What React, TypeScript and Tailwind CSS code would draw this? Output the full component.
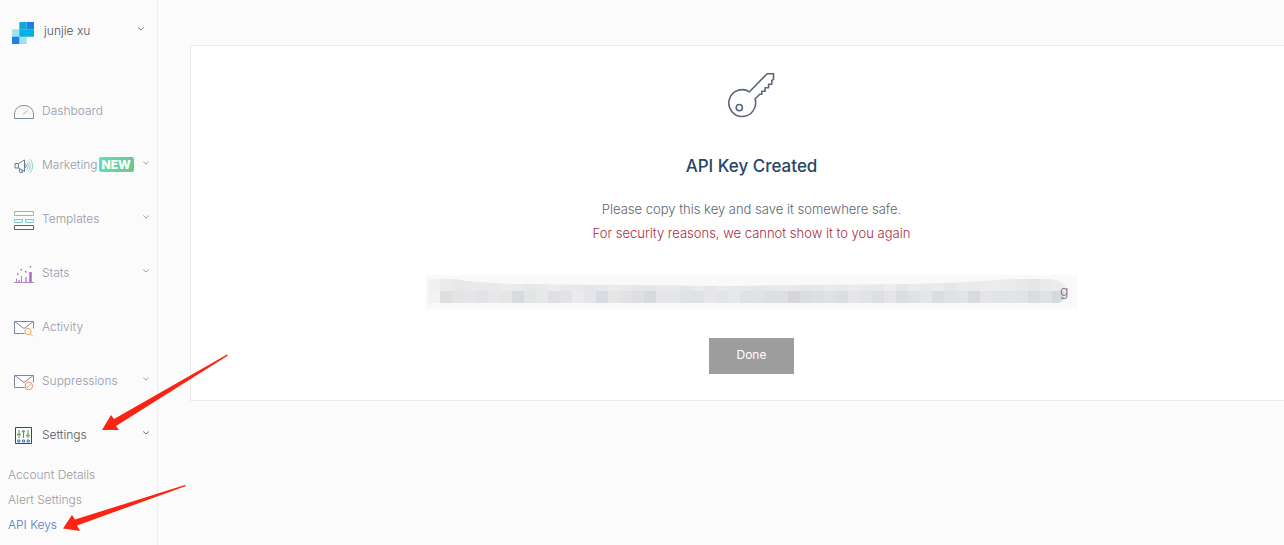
import type { ReactNode } from "react";

function Chevron({ className }: { className: string }) {
  return (
    <svg viewBox="0 0 8 6" className={`h-1.5 w-2 shrink-0 ${className}`} fill="none" stroke="currentColor" strokeWidth="1" aria-hidden="true">
      <path d="M1.2 1.5 4 4 6.8 1.5" />
    </svg>
  );
}

function Logo() {
  return (
    <svg viewBox="0 0 22 22" className="h-[22px] w-[22px] shrink-0" role="img" aria-label="SendGrid">
      <path fill="#9fe1f3" d="M0 7.3h7.3v7.4H0zM7.3 14.7h7.4V22H7.3z" />
      <path fill="#1a82e2" d="M0 14.7h7.3V22H0z" />
      <path fill="#12a8de" d="M7.3 0h7.4v7.3H7.3z" />
      <path fill="#00b2e3" d="M14.7 7.3H22v7.400h-7.300zM7.3 7.3h7.4v7.4H7.3z" />
      <path fill="#1a82e2" d="M14.7 0H22v7.3h-7.3z" />
    </svg>
  );
}

function NavIcon({ children }: { children: ReactNode }) {
  return (
    <svg viewBox="0 0 20 20" className="mt-0.5 h-5 w-5 shrink-0" fill="none" strokeWidth="1" aria-hidden="true">
      {children}
    </svg>
  );
}

const dashboardIcon = (
  <NavIcon>
    <path stroke="#7d8b9a" d="M.5 16.500v-4.300C.5 7 4.800 3.500 10 3.500s9.500 3.500 9.500 8.700v4.300z" />
    <path stroke="#c5ae9a" d="m9 12.500 4.800-4" />
    <path stroke="#d3d9df" strokeDasharray="1 2" d="M3.500 12.500C3.500 8.500 6.500 6 10 6s6.500 2.500 6.500 6.500" />
  </NavIcon>
);

const marketingIcon = (
  <NavIcon>
    <path stroke="#6d7d98" d="M1 7.500h3.500L10.500 4v11.500l-6-3.500H1zM4.500 7.500V12M5 12.500l1 4h2.500l-.8-3M11 8c1.600.5 1.600 3.200 0 3.800" />
    <path stroke="#a4b4c8" d="M12.500 6.200c2.300 1.700 2.300 5.700 0 7.500" />
    <path stroke="#8ad6bd" d="M14 4.500c3 2.500 3 8 0 11M15.800 3c3.600 3.500 3.600 10.500 0 14" />
  </NavIcon>
);

const templatesIcon = (
  <NavIcon>
    <path stroke="#8cc29a" d="M.5 1.500h19v4H.5z" />
    <path stroke="#7fcbd8" d="M.5 9.500h8v3h-8zM11.500 9.500h8v3h-8z" />
    <path stroke="#53677a" d="M.5 15.500h19v4H.5z" />
  </NavIcon>
);

const statsIcon = (
  <NavIcon>
    <path stroke="#b285c1" d="M0 18.500h20M2.500 18v-3.500M7.500 18v-6" />
    <path stroke="#c795d1" strokeWidth="1.600" d="M12 18v-5M5 18v-2" />
    <path stroke="#a566bd" strokeWidth="2.400" d="M16.500 18V8" />
    <path fill="#8f7a9c" d="M3 9.500h1.500V11H3zM6.500 5H8v1.500H6.500zM11 7h1.500v1.500H11zM15.700 2h1.500v1.500h-1.500z" />
  </NavIcon>
);

const envelope = <path stroke="#7d8b9a" d="M10.500 15.500H.5V3.500h19v7M.8 3.500 10 10.500l9.200-7" />;

const activityIcon = (
  <NavIcon>
    {envelope}
    <circle cx="14" cy="13.500" r="3.200" stroke="#f3a75b" />
    <path stroke="#f3a75b" d="m16.300 15.800 2.500 2.500" />
  </NavIcon>
);

const suppressionsIcon = (
  <NavIcon>
    {envelope}
    <circle cx="14.800" cy="14" r="3.800" stroke="#eb9576" />
    <path stroke="#eb9576" d="m12.200 16.600 5.200-5.200" />
  </NavIcon>
);

const settingsIcon = (
  <NavIcon>
    <path stroke="#304b63" d="M1.500 1.500h16v16h-16z" />
    <path stroke="#4d9668" d="M5 4v8M9.500 4v8M14 4v8" />
    <path stroke="#73ad3f" strokeWidth="1.600" d="M3 8.500h4M7.700 5.500h3.600M12.200 9.500h3.600" />
    <path stroke="#2f78b9" d="M3.800 14h2v2h-2zM8.500 14h2v2h-2zM13.200 14h2v2h-2z" />
  </NavIcon>
);

const navItems = [
  { label: "Dashboard", icon: dashboardIcon, menu: false },
  { label: "Marketing", icon: marketingIcon, menu: true, badge: "NEW" },
  { label: "Templates", icon: templatesIcon, menu: true },
  { label: "Stats", icon: statsIcon, menu: true },
  { label: "Activity", icon: activityIcon, menu: false },
  { label: "Suppressions", icon: suppressionsIcon, menu: true },
  { label: "Settings", icon: settingsIcon, menu: true, active: true },
];

function Sidebar() {
  return (
    <aside className="w-[158px] shrink-0 border-r border-[#ededee]">
      <button type="button" className="flex h-[84px] w-full items-start pt-[22px] pr-3 pl-3 text-left text-xs text-[#4b5058]">
        <Logo />
        <span className="ml-2.5 flex-1 leading-[18px]">junjie xu</span>
        <Chevron className="mt-1 text-[#777d87]" />
      </button>
      <nav aria-label="Main">
        <ul>
          {navItems.map((item) => (
            <li key={item.label}>
              <a
                href="#"
                className={`flex h-[54px] items-center pr-[7px] pl-3.5 text-xs whitespace-nowrap ${item.active ? "text-[#51565d]" : "text-[#9399ab]"}`}
              >
                {item.icon}
                <span className="ml-2">{item.label}</span>
                {item.badge && (
                  <span className="mb-0.5 ml-px rounded-xs bg-linear-to-r from-[#5fe0b0] to-[#6cc694] px-[3px] text-xs leading-[15px] font-extrabold text-white">
                    {item.badge}
                  </span>
                )}
                {item.menu && <Chevron className={`mb-1 ml-auto ${item.active ? "text-[#666c74]" : "text-[#a0a5ad]"}`} />}
              </a>
            </li>
          ))}
        </ul>
        <ul className="pl-2 text-xs leading-[25px] text-[#999b9f]">
          <li><a href="#">Account Details</a></li>
          <li><a href="#">Alert Settings</a></li>
          <li><a href="#" className="text-[#5577c8]">API Keys</a></li>
        </ul>
      </nav>
    </aside>
  );
}

function KeyIcon() {
  return (
    <svg viewBox="0 0 48 48" className="h-12 w-12" fill="none" stroke="#596678" strokeWidth="1.600" strokeLinejoin="round" aria-hidden="true">
      <path d="M21.500 20.800 39.200 2.700h6.300v5.500l-1.700 1.600v3.400h-3.200v3.600h-3.500v3.500h-3.300v3h-2l-4.800 4.700A13.400 13.400 0 1 1 21.500 20.800z" />
      <circle cx="11.300" cy="36.600" r="3.100" />
    </svg>
  );
}

const upperTiles = "#f0f0f1 #ebebec #e8e8e9 #e9e9ea #e8e9eb #e9e9eb #ebebec #e9eaeb #e6e7e9 #e9e9ea #ececed #e9e9eb #e8e8e9 #e5e6e9 #e8e8ea #ebebec #e9e9ea #e6e6e8 #e4e5e9 #e9e9eb #e8e8e9 #e5e6e8 #e8e9eb #e4e7e8 #e9eaea #e6e8ea #e7e8e9 #e3e7e8 #e5e7e9 #e9e9ec #e8e8ea #e4e6e8 #e7e7e9 #e9eaeb #e7e8ea #ebebeb #e8e9eb #e7e8ea #ececed #e5e6e7 #e9eaec #e8e9ea #eaebed #e6e7e9 #e9eaec #eaeaed #ececef #ebecee #e9ebed #e8e8eb #e5e6e7 #eaeaec #ececef #ededee".split(" ");
const lowerTiles = "#f2f2f2 #dfdfe1 #e4e4e6 #e5e6e8 #e2e3e6 #e7e7e8 #e5e5e7 #d8dadf #e3e4e6 #e7e8e8 #dfe0e3 #e2e3e6 #ebeaec #e5e6e8 #d9dbe2 #e5e5e8 #e1e2e4 #dddfe3 #d6d8dc #e5e5e8 #e4e7e9 #e0e3e5 #dfe1e4 #e7e7e9 #e2e5e6 #e6e8e9 #dde2e5 #e0e3e6 #dcdfe2 #dddfe2 #d5d6da #dbdde1 #dedfe2 #e0e1e4 #dcdde0 #e4e5e6 #e2e3e6 #dedfe2 #e3e5e8 #dcddde #dfe1e4 #e5e6e8 #dcdde0 #e1e2e4 #e2e3e5 #d9dadc #e4e5e8 #e1e3e6 #e2e5e8 #e1e4e7 #dadde0 #dfe2e5 #d5dadd #e2e6e8".split(" ");

function RedactedKey() {
  return (
    <div className="flex h-[34px] items-start bg-[#f9f9fa] px-0.5 pt-1">
      <svg viewBox="0 0 640 24" className="h-6 w-[640px] shrink-0" role="img" aria-label="Hidden API key">
        <defs>
          <clipPath id="smudge">
            <path d="M4 0H26Q48 4 90 5L300 7 475 5Q540 4 580 0H618Q638 0 638 12 638 22 630 24H0V5Q0 0 4 0z" />
          </clipPath>
        </defs>
        <g clipPath="url(#smudge)" shapeRendering="crispEdges">
          {upperTiles.map((fill, i) => (
            <rect key={i} x={i * 12} y="0" width="12" height="12" fill={fill} />
          ))}
          {lowerTiles.map((fill, i) => (
            <rect key={i} x={i * 12} y="12" width="12" height="12" fill={fill} />
          ))}
        </g>
      </svg>
      <span className="-ml-2 text-sm leading-6 text-[#6b7280]">g</span>
    </div>
  );
}

function Arrow({ points, className }: { points: string; className: string }) {
  return (
    <svg viewBox="0 0 128 80" className={`pointer-events-none absolute h-20 w-32 ${className}`} aria-hidden="true">
      <polygon points={points} fill="#fb2412" />
    </svg>
  );
}

export default function App() {
  return (
    <div className="relative flex min-h-screen overflow-hidden bg-[#fbfbfb] font-['Inter',sans-serif] font-light">
      <Sidebar />
      <main className="min-w-0 flex-1 pt-[45px] pl-8">
        <section className="-mr-[29px] flex flex-col items-center border border-[#ececec] bg-white pt-[25px] pb-[26px]">
          <KeyIcon />
          <h1 className="mt-[35px] text-[17px] leading-6 font-medium text-[#294661]">API Key Created</h1>
          <p className="mt-[19px] text-center text-[13px] leading-6 text-[#60666d]">
            Please copy this key and save it somewhere safe.
            <br />
            <span className="text-[#a82c42]">For security reasons, we cannot show it to you again</span>
          </p>
          <div className="mt-[30px] w-[651px]">
            <RedactedKey />
          </div>
          <button type="button" className="mt-[29px] h-9 w-[85px] bg-[#9d9d9d] pb-0.5 text-xs font-normal text-white">Done</button>
        </section>
      </main>
      <Arrow className="top-[352px] left-[101px]" points="1,78 10,63 13,67 126,2.500 127,3.500 15,74 18,78" />
      <Arrow className="top-[483px] left-[60px]" points="3,45.500 12,32 15,36.500 125,2 126,3 17,42.500 20,48" />
    </div>
  );
}
